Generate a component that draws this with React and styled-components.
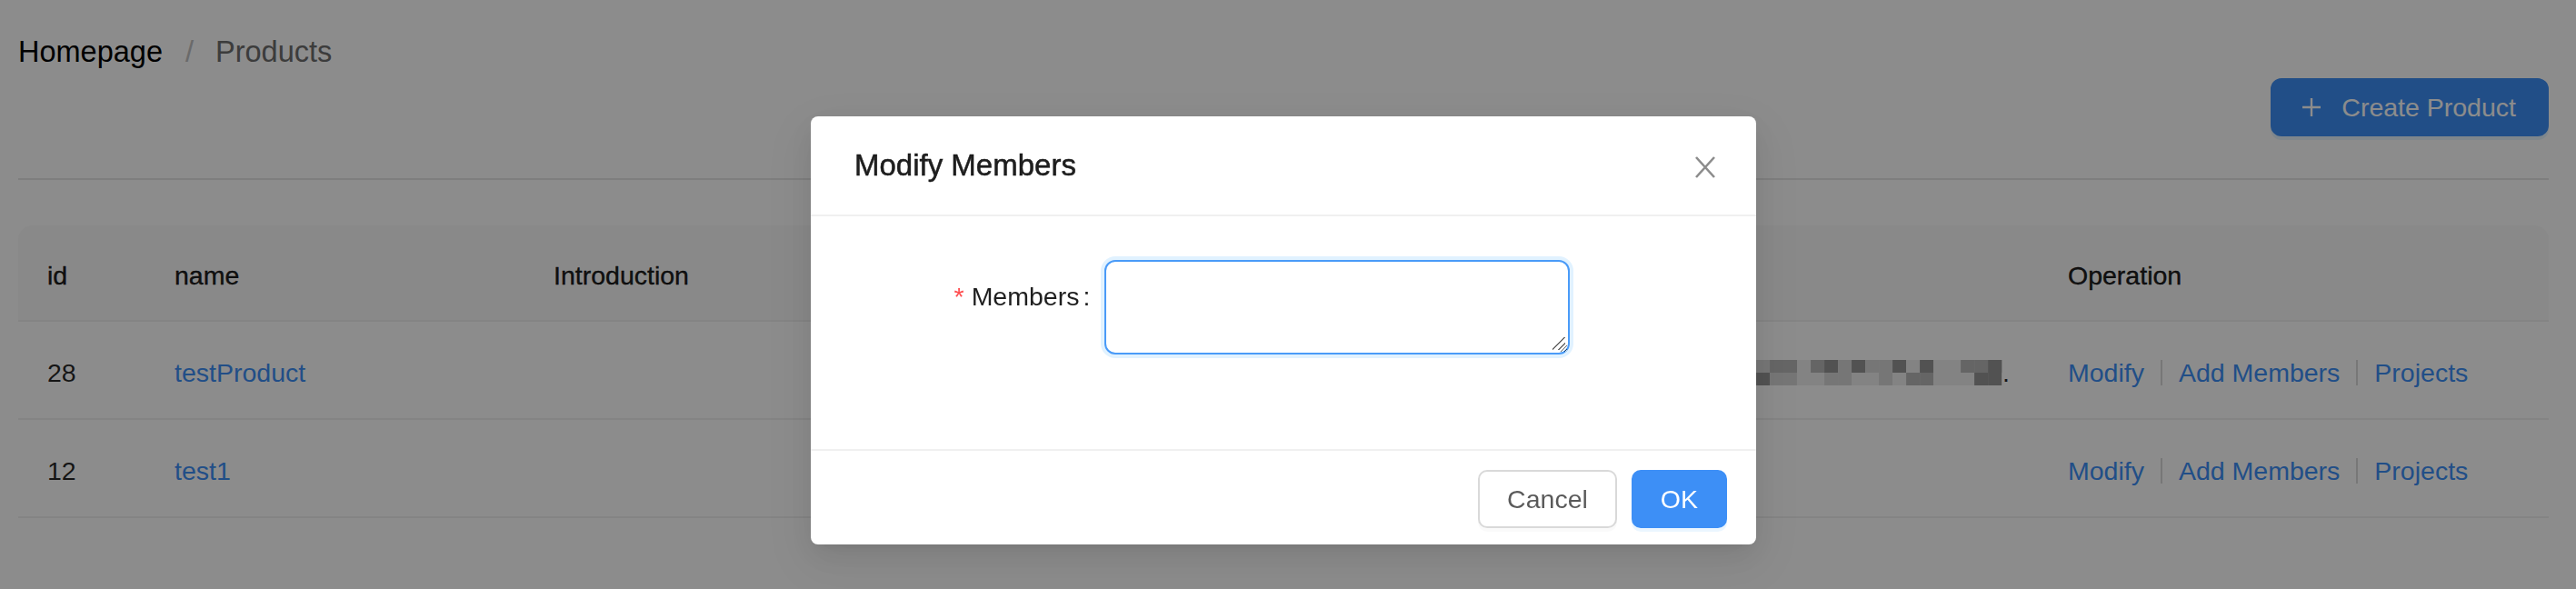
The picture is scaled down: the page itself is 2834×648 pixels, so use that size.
import styled, { createGlobalStyle } from "styled-components";

const GlobalStyle = createGlobalStyle`
  html, body {
    margin: 0;
    padding: 0;
    background: #ffffff;
  }
  body {
    font-family: "Liberation Sans", Arial, Helvetica, sans-serif;
    color: rgba(0, 0, 0, 0.88);
  }
  * {
    box-sizing: border-box;
  }
`;

const PRIMARY = "#3d8ff6";

const Page = styled.div`
  width: 2834px;
  height: 648px;
  overflow: hidden;
  padding: 35px 30px 0 20px;
`;

const Breadcrumb = styled.nav`
  display: flex;
  align-items: center;
  font-size: 32.5px;
  line-height: 44px;
`;

const Crumb = styled.span`
  color: ${(p) => (p.$current ? "#6d6d6d" : "#000000")};
`;

const Separator = styled.span`
  color: #c2c2c2;
  margin: 0 24px 0 25px;
`;

const Toolbar = styled.div`
  display: flex;
  justify-content: flex-end;
  margin-top: 7px;
`;

const PrimaryButton = styled.button`
  display: inline-flex;
  align-items: center;
  gap: 22px;
  height: 64px;
  padding: 0 34px 0 32px;
  border: 2px solid ${PRIMARY};
  border-radius: 12px;
  background: ${PRIMARY};
  color: #ffffff;
  font-family: inherit;
  font-size: 28.5px;
  box-shadow: 0 4px 0 rgba(5, 145, 255, 0.1);
  cursor: pointer;
`;

const Divider = styled.div`
  height: 2px;
  background: #e6e6e6;
  margin-top: 46px;
`;

const Table = styled.div`
  margin-top: 50px;
`;

const Row = styled.div`
  display: grid;
  grid-template-columns: 140px 417px 723px 943px 1fr;
  border-bottom: 2px solid #f0f0f0;
  background: ${(p) => (p.$head ? "#fafafa" : "transparent")};
  border-radius: ${(p) => (p.$head ? "16px 16px 0 0" : "0")};
`;

const Cell = styled.div`
  display: flex;
  align-items: center;
  min-width: 0;
  padding: ${(p) => (p.$head ? "33px 32px 27px" : "34px 32px 28px")};
  font-size: 28.5px;
  line-height: 44px;
  white-space: nowrap;
  overflow: hidden;
  color: ${(p) => (p.$head ? "rgba(0, 0, 0, 0.9)" : "rgba(0, 0, 0, 0.85)")};
  -webkit-text-stroke: ${(p) => (p.$head ? "0.4px currentColor" : "0")};
`;

const Link = styled.a`
  color: ${PRIMARY};
  text-decoration: none;
  cursor: pointer;
`;

const OpDivider = styled.span`
  display: inline-block;
  width: 2px;
  height: 28px;
  background: #d9d9d9;
  margin: 0 18px;
`;

const Mosaic = styled.svg`
  flex: 1;
  height: 28px;
  min-width: 0;
`;

const Mask = styled.div`
  position: fixed;
  inset: 0;
  background: rgba(0, 0, 0, 0.45);
  z-index: 10;
`;

const Modal = styled.div`
  position: fixed;
  top: 128px;
  left: 892px;
  width: 1040px;
  background: #ffffff;
  border-radius: 8px;
  z-index: 11;
  box-shadow: 0 12px 32px 0 rgba(0, 0, 0, 0.08), 0 6px 12px -8px rgba(0, 0, 0, 0.12),
    0 18px 56px 16px rgba(0, 0, 0, 0.05);
`;

const ModalHeader = styled.div`
  padding: 32px 48px;
  border-bottom: 2px solid #f0f0f0;
`;

const ModalTitle = styled.div`
  font-size: 33px;
  line-height: 44px;
  color: rgba(0, 0, 0, 0.88);
  -webkit-text-stroke: 0.5px currentColor;
`;

const CloseButton = styled.button`
  position: absolute;
  top: 0;
  right: 0;
  width: 112px;
  height: 112px;
  display: flex;
  align-items: center;
  justify-content: center;
  border: 0;
  background: transparent;
  padding: 0;
  cursor: pointer;
`;

const ModalBody = styled.div`
  padding: 48px 48px 48px;
`;

const FormRow = styled.div`
  display: grid;
  grid-template-columns: 7fr 13fr 4fr;
  margin-bottom: 56px;
`;

const Label = styled.label`
  text-align: right;
  font-size: 28.5px;
  line-height: 64px;
  padding-top: 8px;
  color: rgba(0, 0, 0, 0.88);
  white-space: nowrap;
`;

const Required = styled.span`
  color: #ff4d4f;
  margin-right: 8px;
`;

const Colon = styled.span`
  margin: 0 16px 0 4px;
`;

const TextAreaWrap = styled.div`
  position: relative;
`;

const TextArea = styled.textarea`
  display: block;
  width: 100%;
  height: 104px;
  padding: 8px 22px;
  border: 2px solid #4a9bf8;
  border-radius: 12px;
  box-shadow: 0 0 0 4px rgba(5, 145, 255, 0.12);
  font-family: inherit;
  font-size: 28px;
  outline: none;
  resize: vertical;
`;

const ResizeGrip = styled.span`
  position: absolute;
  right: 5px;
  bottom: 5px;
  width: 14px;
  height: 14px;
  pointer-events: none;
  background: linear-gradient(
    135deg,
    transparent 0 44%,
    #6f6f6f 44% 52%,
    transparent 52% 70%,
    #6f6f6f 70% 78%,
    transparent 78%
  );
`;

const ModalFooter = styled.div`
  display: flex;
  justify-content: flex-end;
  gap: 16px;
  padding: 21px 32px 18px;
  border-top: 2px solid #f0f0f0;
`;

const Button = styled.button`
  height: 64px;
  padding: 0 30px;
  border-radius: 10px;
  font-family: inherit;
  font-size: 28.5px;
  cursor: pointer;
  border: 2px solid ${(p) => (p.$primary ? PRIMARY : "#d9d9d9")};
  background: ${(p) => (p.$primary ? PRIMARY : "#ffffff")};
  color: ${(p) => (p.$primary ? "#ffffff" : "rgba(0, 0, 0, 0.65)")};
  box-shadow: 0 4px 0 ${(p) => (p.$primary ? "rgba(5, 145, 255, 0.08)" : "rgba(0, 0, 0, 0.02)")};
`;

function PlusIcon() {
  return (
    <svg width="22" height="22" viewBox="0 0 22 22" aria-hidden="true">
      <path d="M11 1v20M1 11h20" stroke="currentColor" strokeWidth="2.4" fill="none" />
    </svg>
  );
}

function CloseIcon() {
  return (
    <svg width="22" height="24" viewBox="0 0 22 24" aria-hidden="true">
      <path d="M1 1l20 22M21 1L1 23" stroke="#8c8c8c" strokeWidth="2.6" fill="none" />
    </svg>
  );
}

// pixelated (censored) text
function Pixelated() {
  let seed = 7;
  const rand = () => {
    seed = (seed * 9301 + 49297) % 233280;
    return seed / 233280;
  };
  const blocks = [];
  for (let x = 0; x < 880; x += 15) {
    for (let y = 0; y < 2; y++) {
      const r = rand();
      const v = r < 0.15 ? 150 : r < 0.35 ? 185 : r < 0.6 ? 215 : 238;
      blocks.push(
        <rect key={x + "-" + y} x={x} y={y * 14} width="15" height="14" fill={`rgb(${v},${v},${v})`} />
      );
    }
  }
  return (
    <Mosaic viewBox="0 0 871 28" preserveAspectRatio="xMaxYMid slice">
      {blocks}
    </Mosaic>
  );
}

const rows = [
  { id: 28, name: "testProduct", hidden: true },
  { id: 12, name: "test1", hidden: false },
];

function Operations() {
  return (
    <>
      <Link>Modify</Link>
      <OpDivider />
      <Link>Add Members</Link>
      <OpDivider />
      <Link>Projects</Link>
    </>
  );
}

export default function App() {
  return (
    <>
      <GlobalStyle />
      <Page>
        <Breadcrumb>
          <Crumb>Homepage</Crumb>
          <Separator>/</Separator>
          <Crumb $current>Products</Crumb>
        </Breadcrumb>
        <Toolbar>
          <PrimaryButton>
            <PlusIcon />
            Create Product
          </PrimaryButton>
        </Toolbar>
        <Divider />
        <Table>
          <Row $head>
            <Cell $head>id</Cell>
            <Cell $head>name</Cell>
            <Cell $head>Introduction</Cell>
            <Cell $head>Members</Cell>
            <Cell $head>Operation</Cell>
          </Row>
          {rows.map((r) => (
            <Row key={r.id}>
              <Cell>{r.id}</Cell>
              <Cell>
                <Link>{r.name}</Link>
              </Cell>
              <Cell />
              <Cell>
                {r.hidden ? (
                  <>
                    <Pixelated />
                    <span>.</span>
                  </>
                ) : null}
              </Cell>
              <Cell>
                <Operations />
              </Cell>
            </Row>
          ))}
        </Table>
      </Page>
      <Mask />
      <Modal>
        <ModalHeader>
          <ModalTitle>Modify Members</ModalTitle>
        </ModalHeader>
        <CloseButton aria-label="Close">
          <CloseIcon />
        </CloseButton>
        <ModalBody>
          <FormRow>
            <Label>
              <Required>*</Required>
              Members
              <Colon>:</Colon>
            </Label>
            <TextAreaWrap>
              <TextArea />
              <ResizeGrip />
            </TextAreaWrap>
          </FormRow>
        </ModalBody>
        <ModalFooter>
          <Button>Cancel</Button>
          <Button $primary>OK</Button>
        </ModalFooter>
      </Modal>
    </>
  );
}
